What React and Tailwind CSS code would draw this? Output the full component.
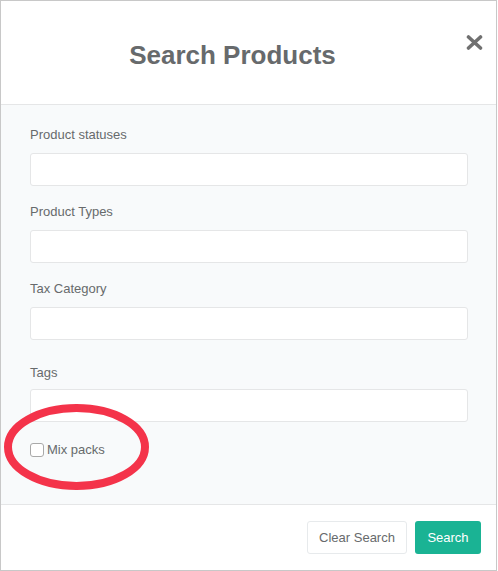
import React from 'react';

const fields = [
  { label: 'Product statuses', top: 'mt-[21px]', gap: 'mb-[9px]' },
  { label: 'Product Types', top: 'mt-[17px]', gap: 'mb-[9px]' },
  { label: 'Tax Category', top: 'mt-[17px]', gap: 'mb-[9px]' },
  { label: 'Tags', top: 'mt-[24px]', gap: 'mb-[7px]' },
];

const App = () => {
  return (
    <div className="relative w-[497px] h-[571px] bg-white border border-[#c8c8c8] flex flex-col text-[#676a6c] font-['Liberation_Sans',Arial,sans-serif]">
      {/* header */}
      <div className="relative h-[104px] flex items-center justify-center pr-[32px] border-b border-[#e5e6e7]">
        <h1 className="text-[26px] font-bold leading-none mt-[4px] text-[#676a6c]">Search Products</h1>
        <svg className="absolute left-[465px] top-[34px]" width="17" height="15" viewBox="0 0 17 15">
          <path d="M2.5 2 L14.5 13 M14.5 2 L2.5 13" stroke="#707070" strokeWidth="3.6" strokeLinecap="round" />
        </svg>
      </div>

      {/* body */}
      <div className="h-[400px] bg-[#f8fafb] px-[29px] flex flex-col border-b border-[#e5e6e7]">
        {fields.map((f) => (
          <div key={f.label} className={f.top}>
            <label className={`block text-[13px] leading-[18px] ${f.gap}`}>{f.label}</label>
            <div className="h-[33px] w-[438px] bg-white border border-[#e5e6e7] rounded-[3px]" />
          </div>
        ))}
        <div className="mt-[19px] flex items-center gap-[3px]">
          <span className="w-[14px] h-[14px] bg-white border border-[#a9a9a9] rounded-[3px]" />
          <span className="text-[13px] leading-[18px]">Mix packs</span>
        </div>
      </div>

      {/* footer */}
      <div className="flex-1 flex items-start justify-end gap-[8px] pt-[16px] pr-[15px]">
        <button className="h-[33px] w-[100px] bg-white border border-[#e7eaec] rounded-[3px] text-[13px] text-[#676a6c]">
          Clear Search
        </button>
        <button className="h-[33px] w-[66px] bg-[#1ab394] rounded-[3px] text-[13px] text-white">
          Search
        </button>
      </div>

      {/* red annotation circle */}
      <svg className="absolute left-[2px] top-[402px] pointer-events-none" width="147" height="88" viewBox="0 0 147 88">
        <ellipse cx="73.5" cy="44" rx="68.5" ry="39" fill="none" stroke="#f4334a" strokeWidth="8" />
      </svg>
    </div>
  );
};

export default App;
